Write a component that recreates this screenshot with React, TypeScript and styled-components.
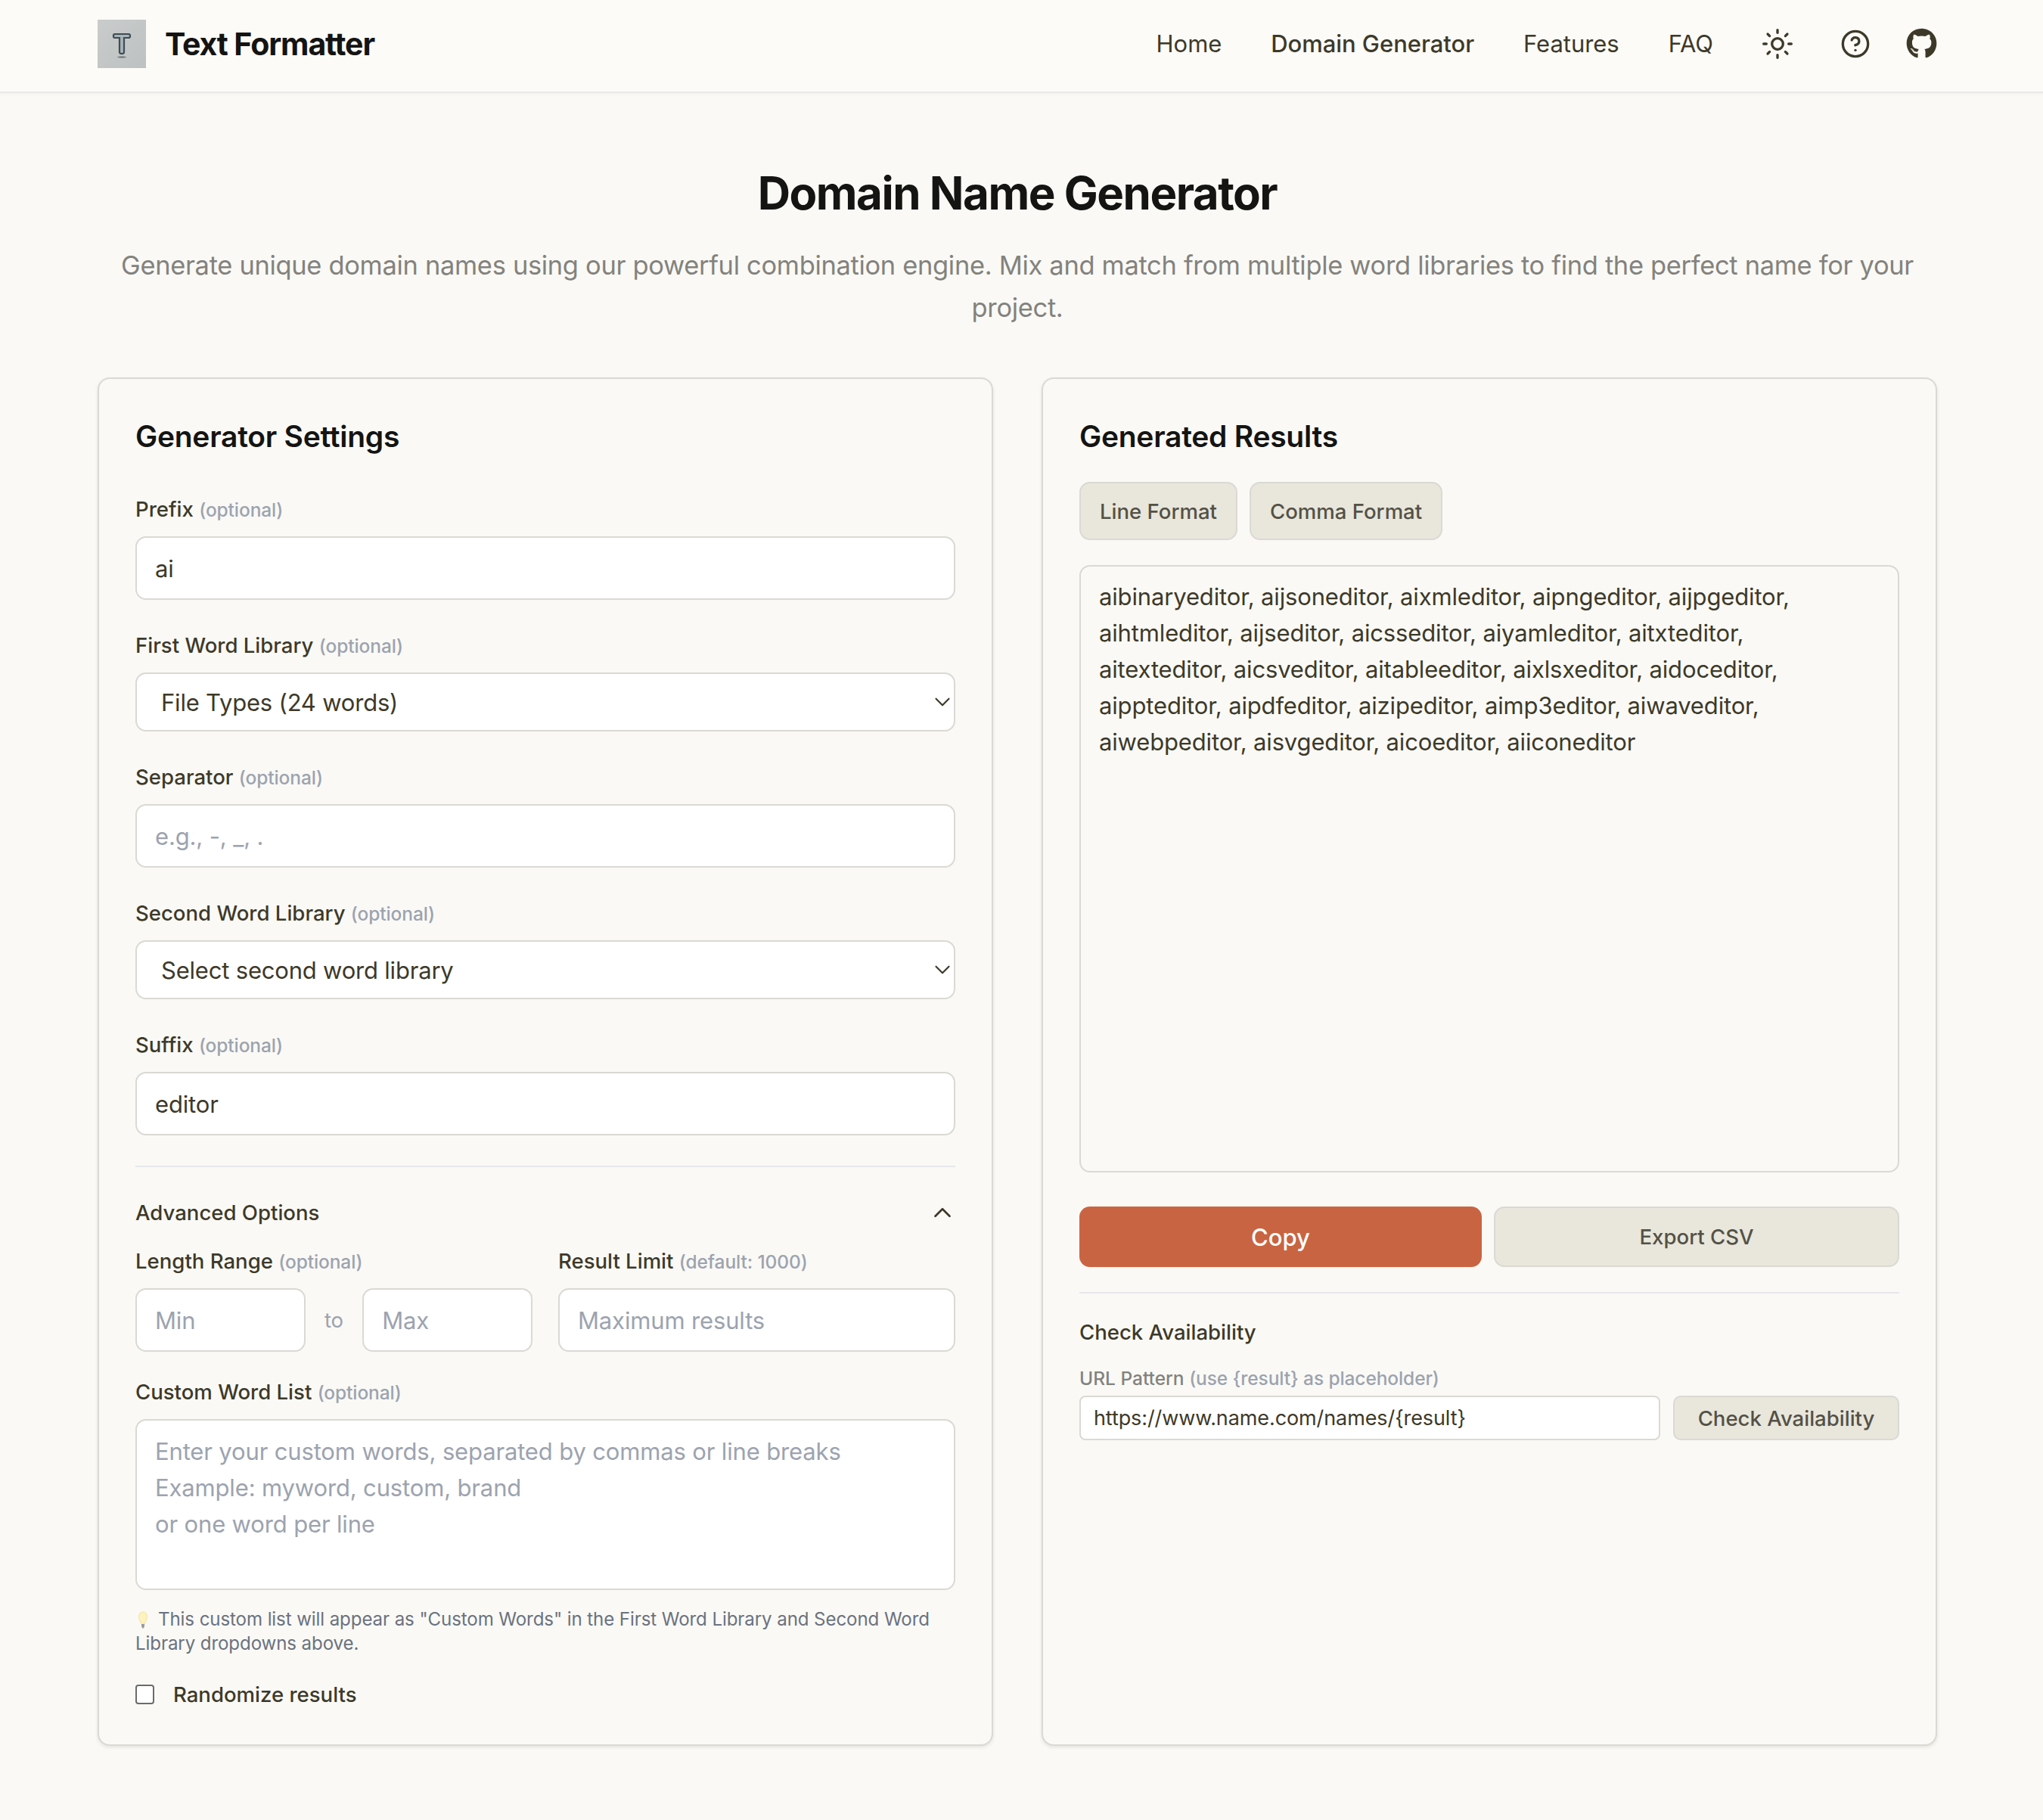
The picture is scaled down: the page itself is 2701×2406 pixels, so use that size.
import React from 'react';
import styled, { createGlobalStyle } from 'styled-components';
import { Sun, CircleHelp, ChevronDown, ChevronUp } from 'lucide-react';
import { FaGithub } from 'react-icons/fa';

const OUTPUT =
  'aibinaryeditor, aijsoneditor, aixmleditor, aipngeditor, aijpgeditor, aihtmleditor, aijseditor, aicsseditor, aiyamleditor, aitxteditor, aitexteditor, aicsveditor, aitableeditor, aixlsxeditor, aidoceditor, aippteditor, aipdfeditor, aizipeditor, aimp3editor, aiwaveditor, aiwebpeditor, aisvgeditor, aicoeditor, aiiconeditor';

const CUSTOM_PLACEHOLDER =
  'Enter your custom words, separated by commas or line breaks\nExample: myword, custom, brand\nor one word per line';

const Logo = () => (
  <LogoBox>
    <svg width="30" height="44" viewBox="0 0 30 44" fill="none">
      <path
        d="M6 9H24Q26 9 26 11V12Q26 14 24 14H18V33Q18 35 15 35Q12 35 12 33V14H6Q4 14 4 12V11Q4 9 6 9Z"
        fill="#a9b4b8"
        stroke="#3f4d55"
        strokeWidth="2.200"
      />
      <ellipse cx="15" cy="39.500" rx="6" ry="1.200" fill="#55595b" opacity="0.7" />
    </svg>
  </LogoBox>
);

const BulbIcon = () => (
  <BulbSvg width="18" height="24" viewBox="0 0 18 24">
    <path d="M9 1C5.500 1 3.500 4 3.500 7.500c0 3 2 5 3 8.500h5c1-3.500 3-5.500 3-8.500C14.500 4 12.500 1 9 1z" fill="#fdf3c0" stroke="#f5e08f" />
    <path d="M6.800 17h4.400l-.5 4-1.700 2-1.700-2z" fill="#9a9a9a" />
  </BulbSvg>
);

const Field = ({ label, note, children, $mb = 40 }: any) => (
  <FieldBlock $mb={$mb}>
    <Label>
      {label} <Note>{note}</Note>
    </Label>
    {children}
  </FieldBlock>
);

const SelectField = ({ value }: any) => (
  <SelectWrap>
    <Select defaultValue={value}>
      <option value={value}>{value}</option>
    </Select>
    <SelectArrow>
      <ChevronDown size={34} strokeWidth={1.5} />
    </SelectArrow>
  </SelectWrap>
);

export default function App() {
  return (
    <>
      <GlobalStyle />
      <Header>
        <Brand>
          <Logo />
          <BrandName>Text Formatter</BrandName>
        </Brand>
        <Nav>
          <NavLink>Home</NavLink>
          <NavLink $active>Domain Generator</NavLink>
          <NavLink>Features</NavLink>
          <NavLink>FAQ</NavLink>
          <IconSlot $left={63}>
            <Sun size={44} strokeWidth={1.8} />
          </IconSlot>
          <IconSlot $left={61}>
            <CircleHelp size={40} strokeWidth={2} />
          </IconSlot>
          <IconSlot $left={47}>
            <FaGithub size={41} />
          </IconSlot>
        </Nav>
      </Header>
      <Main>
        <Intro>
          <Title>Domain Name Generator</Title>
          <Lead>
            Generate unique domain names using our powerful combination engine. Mix and match from
            multiple word libraries to find the perfect name for your project.
          </Lead>
        </Intro>
        <Columns>
          <Card>
            <CardTitle $mb={48}>Generator Settings</CardTitle>
            <Field label="Prefix" note="(optional)">
              <Input defaultValue="ai" />
            </Field>
            <Field label="First Word Library" note="(optional)">
              <SelectField value="File Types (24 words)" />
            </Field>
            <Field label="Separator" note="(optional)">
              <Input placeholder="e.g., -, _, ." />
            </Field>
            <Field label="Second Word Library" note="(optional)">
              <SelectField value="Select second word library" />
            </Field>
            <Field label="Suffix" note="(optional)" $mb={40}>
              <Input defaultValue="editor" />
            </Field>
            <Divider />
            <AdvancedRow>
              <span>Advanced Options</span>
              <ChevronUp size={38} strokeWidth={1.7} />
            </AdvancedRow>
            <AdvancedGrid>
              <Field label="Length Range" note="(optional)" $mb={0}>
                <RangeRow>
                  <Input placeholder="Min" />
                  <RangeWord>to</RangeWord>
                  <Input placeholder="Max" />
                </RangeRow>
              </Field>
              <Field label="Result Limit" note="(default: 1000)" $mb={0}>
                <Input placeholder="Maximum results" />
              </Field>
            </AdvancedGrid>
            <Field label="Custom Word List" note="(optional)" $mb={0}>
              <CustomArea placeholder={CUSTOM_PLACEHOLDER} />
            </Field>
            <Hint>
              <BulbIcon />
              This custom list will appear as "Custom Words" in the First Word Library and Second
              Word Library dropdowns above.
            </Hint>
            <CheckRow>
              <Check type="checkbox" />
              Randomize results
            </CheckRow>
          </Card>
          <Card>
            <CardTitle $mb={32}>Generated Results</CardTitle>
            <FormatRow>
              <FormatButton>Line Format</FormatButton>
              <FormatButton>Comma Format</FormatButton>
            </FormatRow>
            <Output readOnly defaultValue={OUTPUT} />
            <ActionRow>
              <CopyButton>Copy</CopyButton>
              <ExportButton>Export CSV</ExportButton>
            </ActionRow>
            <Divider />
            <SectionName>Check Availability</SectionName>
            <SmallLabel>
              URL Pattern <Note>(use {'{result}'} as placeholder)</Note>
            </SmallLabel>
            <UrlRow>
              <UrlInput defaultValue="https://www.name.com/names/{result}" />
              <CheckButton>Check Availability</CheckButton>
            </UrlRow>
          </Card>
        </Columns>
      </Main>
    </>
  );
}

const GlobalStyle = createGlobalStyle`
  * {
    box-sizing: border-box;
  }
  body {
    margin: 0;
    background: #faf9f5;
    color: #3d3929;
    font-family: Inter, "Liberation Sans", sans-serif;
  }
  input, select, textarea, button {
    font-family: inherit;
  }
  input::placeholder, textarea::placeholder {
    color: #9ca3af;
    opacity: 1;
  }
`;

const Header = styled.header`
  display: flex;
  align-items: center;
  justify-content: space-between;
  height: 123px;
  padding: 0 140px 6px 129px;
  background: #fcfbf7;
  border-bottom: 2px solid #e8e8ea;
  box-shadow: 0 2px 5px rgba(0, 0, 0, 0.03);
`;

const Brand = styled.div`
  display: flex;
  align-items: center;
  gap: 25px;
`;

const LogoBox = styled.div`
  display: flex;
  align-items: center;
  justify-content: center;
  width: 64px;
  height: 64px;
  background: linear-gradient(135deg, #c9cccb, #bdc1c1);
`;

const BrandName = styled.div`
  font-size: 41px;
  font-weight: 700;
  letter-spacing: -1.1px;
  color: #141413;
`;

const Nav = styled.nav`
  display: flex;
  align-items: center;
  gap: 65px;
`;

const NavLink = styled.a<{ $active?: boolean }>`
  font-size: 31px;
  letter-spacing: -0.05px;
  font-weight: ${(p) => (p.$active ? 500 : 400)};
  color: #3d3929;
`;

const IconSlot = styled.span<{ $left: number }>`
  display: flex;
  margin-left: ${(p) => p.$left - 65}px;
  color: #3d3929;
`;

const Main = styled.main`
  padding: 97px 140px 98px 129px;
`;

const Intro = styled.div`
  text-align: center;
  margin-bottom: 64px;
`;

const Title = styled.h1`
  margin: 0 0 33px;
  font-size: 60px;
  line-height: 70px;
  font-weight: 700;
  letter-spacing: -1.48px;
  color: #141413;
`;

const Lead = styled.p`
  margin: 0;
  font-size: 34.45px;
  line-height: 56px;
  letter-spacing: -0.31px;
  color: #83827d;
`;

const Columns = styled.div`
  display: grid;
  grid-template-columns: 1184px 1184px;
  gap: 64px;
`;

const Card = styled.section`
  padding: 48px 48px 0;
  height: 1809px;
  background: #faf9f5;
  border: 2px solid #dad9d4;
  border-radius: 16px;
  box-shadow: 0 2px 5px rgba(0, 0, 0, 0.09);
`;

const CardTitle = styled.h2<{ $mb: number }>`
  margin: 0 0 ${(p) => p.$mb}px;
  font-size: 39px;
  line-height: 56px;
  font-weight: 600;
  letter-spacing: -0.26px;
  color: #141413;
`;

const FieldBlock = styled.div<{ $mb: number }>`
  margin-bottom: ${(p) => p.$mb}px;
  min-width: 0;
`;

const Label = styled.label`
  display: block;
  margin-bottom: 16px;
  font-size: 27.56px;
  line-height: 40px;
  font-weight: 500;
  color: #3d3929;
`;

const Note = styled.span`
  font-size: 24.5px;
  line-height: 1;
  font-weight: 500;
  letter-spacing: -0.1px;
  color: #9ca3af;
`;

const Input = styled.input`
  display: block;
  width: 100%;
  min-width: 0;
  height: 84px;
  padding: 0 24px;
  font-size: 31px;
  letter-spacing: -0.15px;
  color: #3d3929;
  background: #fff;
  border: 2px solid #dad9d4;
  border-radius: 14px;
  outline: none;
`;

const SelectWrap = styled.div`
  position: relative;
`;

const Select = styled.select`
  display: block;
  width: 100%;
  height: 78px;
  padding: 0 32px;
  font-size: 31px;
  letter-spacing: -0.2px;
  color: #3d3929;
  background: #fff;
  border: 2px solid #dad9d4;
  border-radius: 14px;
  appearance: none;
  outline: none;
`;

const SelectArrow = styled.span`
  position: absolute;
  top: 22px;
  right: 0;
  display: flex;
  color: #3d3929;
  pointer-events: none;
`;

const Divider = styled.hr`
  height: 2px;
  margin: 0;
  background: #e5e7eb;
  border: 0;
`;

const AdvancedRow = styled.div`
  display: flex;
  align-items: center;
  justify-content: space-between;
  height: 40px;
  margin: 40px 0 24px;
  font-size: 27.56px;
  font-weight: 500;
  color: #3d3929;

  svg {
    margin-right: -2px;
  }
`;

const AdvancedGrid = styled.div`
  display: grid;
  grid-template-columns: 1fr 1fr;
  gap: 34px;
  margin-bottom: 33px;
`;

const RangeRow = styled.div`
  display: flex;
  align-items: center;
  gap: 25px;
`;

const RangeWord = styled.span`
  font-size: 27.56px;
  color: #9ca3af;
`;

const CustomArea = styled.textarea`
  display: block;
  width: 100%;
  height: 226px;
  padding: 17px 24px;
  font-size: 31px;
  line-height: 48px;
  letter-spacing: -0.15px;
  color: #3d3929;
  background: #fff;
  border: 2px solid #dad9d4;
  border-radius: 14px;
  resize: none;
  outline: none;
`;

const Hint = styled.p`
  margin: 23px 0 34px;
  font-size: 24.1px;
  line-height: 32px;
  letter-spacing: -0.1px;
  color: #6b7280;
`;

const BulbSvg = styled.svg`
  vertical-align: -5px;
  margin: 0 11px 0 1px;
`;

const CheckRow = styled.label`
  display: flex;
  align-items: center;
  gap: 25px;
  font-size: 27.56px;
  font-weight: 500;
  color: #3d3929;
`;

const Check = styled.input`
  width: 25px;
  height: 26px;
  margin: 0;
  appearance: none;
  background: #fff;
  border: 2px solid #6b6b6b;
  border-radius: 4px;
`;

const FormatRow = styled.div`
  display: flex;
  gap: 16px;
  margin-bottom: 33px;
`;

const SecondaryButton = styled.button`
  font-weight: 500;
  color: #535146;
  background: #e9e6dc;
  border: 2px solid #dad9d4;
  border-radius: 14px;
`;

const FormatButton = styled(SecondaryButton)`
  height: 77px;
  padding: 0 25px;
  font-size: 27.56px;
`;

const Output = styled.textarea`
  display: block;
  width: 100%;
  height: 803px;
  padding: 16px 100px 16px 24px;
  font-size: 31px;
  line-height: 48px;
  letter-spacing: -0.15px;
  color: #3d3929;
  background: transparent;
  border: 2px solid #dad9d4;
  border-radius: 14px;
  resize: none;
  outline: none;
`;

const ActionRow = styled.div`
  display: grid;
  grid-template-columns: 532px 1fr;
  gap: 16px;
  margin: 45px 0 33px;
`;

const CopyButton = styled.button`
  height: 80px;
  font-size: 31px;
  font-weight: 500;
  color: #fff;
  background: #c96442;
  border: 0;
  border-radius: 14px;
`;

const ExportButton = styled(SecondaryButton)`
  height: 80px;
  font-size: 27.56px;
`;

const SectionName = styled.div`
  margin: 31px 0 23px;
  font-size: 27.56px;
  line-height: 40px;
  font-weight: 500;
  color: #3d3929;
`;

const SmallLabel = styled.div`
  margin-bottom: 5px;
  font-size: 24.5px;
  line-height: 36px;
  font-weight: 500;
  color: #83827d;
`;

const UrlRow = styled.div`
  display: flex;
  gap: 17px;
`;

const UrlInput = styled(Input)`
  flex: 1;
  height: 59px;
  padding: 0 17px;
  font-size: 27px;
  letter-spacing: -0.1px;
  border-radius: 8px;
`;

const CheckButton = styled(SecondaryButton)`
  width: 299px;
  height: 59px;
  padding: 0;
  font-size: 27.56px;
  border-radius: 10px;
`;
